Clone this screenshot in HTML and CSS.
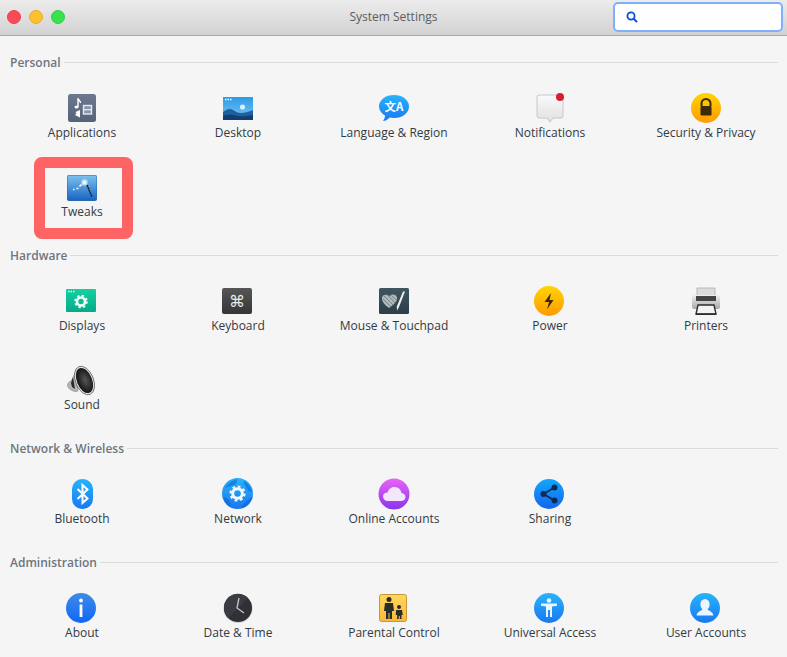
FILE: index.html
```html
<!DOCTYPE html>
<html lang="en">
<head>
<meta charset="utf-8">
<title>System Settings</title>
<link rel="stylesheet" href="styles.css">
</head>
<body>
<svg class="defs" aria-hidden="true">
  <defs>
    <linearGradient id="gYellow" x1="0" y1="0" x2="0" y2="1"><stop offset="0" stop-color="#ffd500"/><stop offset="1" stop-color="#ff9a00"/></linearGradient>
    <linearGradient id="gBlue" x1="0" y1="0" x2="0" y2="1"><stop offset="0" stop-color="#28b4fb"/><stop offset="1" stop-color="#1a78f2"/></linearGradient>
    <linearGradient id="gAbout" x1="0" y1="0" x2="0" y2="1"><stop offset="0" stop-color="#3f8ae8"/><stop offset="1" stop-color="#0f68f5"/></linearGradient>
    <linearGradient id="gShare" x1="0" y1="0" x2="0" y2="1"><stop offset="0" stop-color="#12a8fb"/><stop offset="1" stop-color="#1464f0"/></linearGradient>
    <linearGradient id="gPurple" x1="0" y1="0" x2="0" y2="1"><stop offset="0" stop-color="#ea64f6"/><stop offset="1" stop-color="#8a34ee"/></linearGradient>
    <linearGradient id="gSky" x1="0" y1="0" x2="0" y2="1"><stop offset="0" stop-color="#2b9be6"/><stop offset="1" stop-color="#7cc5f2"/></linearGradient>
    <linearGradient id="gTweak" x1="0" y1="0" x2="0" y2="1"><stop offset="0" stop-color="#7cc0ee"/><stop offset="1" stop-color="#1b66c4"/></linearGradient>
    <linearGradient id="gGreen" x1="0" y1="0" x2="0" y2="1"><stop offset="0" stop-color="#14d0a0"/><stop offset="1" stop-color="#04ab88"/></linearGradient>
    <linearGradient id="gSlate" x1="0" y1="0" x2="0" y2="1"><stop offset="0" stop-color="#6c7890"/><stop offset="1" stop-color="#56627a"/></linearGradient>
    <linearGradient id="gKey" x1="0" y1="0" x2="0" y2="1"><stop offset="0" stop-color="#565656"/><stop offset="1" stop-color="#353535"/></linearGradient>
    <linearGradient id="gTeal" x1="0" y1="0" x2="0" y2="1"><stop offset="0" stop-color="#3f5660"/><stop offset="1" stop-color="#2c3e48"/></linearGradient>
    <linearGradient id="gNote" x1="0" y1="0" x2="0" y2="1"><stop offset="0" stop-color="#fafafa"/><stop offset="1" stop-color="#e0e0e0"/></linearGradient>
    <linearGradient id="gParent" x1="0" y1="0" x2="0" y2="1"><stop offset="0" stop-color="#ffd75a"/><stop offset="1" stop-color="#f7b93a"/></linearGradient>
    <linearGradient id="gPrint" x1="0" y1="0" x2="0" y2="1"><stop offset="0" stop-color="#f0f0f0"/><stop offset="1" stop-color="#a8a8a8"/></linearGradient>
    <radialGradient id="gCone" cx="0.55" cy="0.5" r="0.55"><stop offset="0" stop-color="#555"/><stop offset="1" stop-color="#111"/></radialGradient>
  </defs>
</svg>

<header class="titlebar">
  <div class="controls">
    <span class="dot dot-close"></span>
    <span class="dot dot-min"></span>
    <span class="dot dot-max"></span>
  </div>
  <div class="title">System Settings</div>
  <div class="search">
    <svg class="search-icon" viewBox="0 0 12 12" width="12" height="12"><circle cx="5" cy="5" r="3.6" fill="none" stroke="#0b4fd0" stroke-width="1.8"/><path d="M7.6 7.6L11 11" stroke="#0b4fd0" stroke-width="2"/></svg>
  </div>
</header>

<main class="content">
  <section class="section">
    <div class="section-title"><span class="section-name">Personal</span><i class="rule"></i></div>
    <div class="grid">
      <div class="item">
        <svg class="icon" viewBox="0 0 32 32"><rect x="2" y="2" width="28" height="28" rx="2.5" fill="url(#gSlate)"/><path d="M12 6v9M12 6c.4 2.400 2.500 2.800 2.500 5" stroke="#fff" stroke-width="1.400" fill="none"/><ellipse cx="10.500" cy="15" rx="2" ry="1.600" fill="#fff"/><path d="M14 18v7.500l-5-2.500 1.500-1.500-1-1.500z" fill="#fff"/><rect x="17.500" y="13.500" width="8" height="8.500" fill="#8a94a8" stroke="#e6e8ee" stroke-width="1.400"/><path d="M17.500 17.700h8" stroke="#e6e8ee" stroke-width="1.300"/></svg>
        <span class="label">Applications</span>
      </div>
      <div class="item">
        <svg class="icon" viewBox="0 0 32 32"><rect x="1" y="5" width="30" height="23" fill="url(#gSky)"/><circle cx="20.500" cy="15" r="2.600" fill="#d8eefb"/><path d="M1 20c4-3 7-4 10-2s5 3 8 3 8-1 12-3v10H1z" fill="#1f5f9e"/><path d="M1 24c6-2 10-1 15 0s10 0 15-1v5H1z" fill="#123e72"/><path d="M3 7.500h1.500M5.500 7.500H7M8 7.500h1.500" stroke="#fff" stroke-width="1.500"/></svg>
        <span class="label">Desktop</span>
      </div>
      <div class="item">
        <svg class="icon" viewBox="0 0 32 32"><path d="M16 3c8.300 0 15 4.800 15 11.500S24.300 26 16 26c-1.500 0-3-.2-4.300-.5C10 27.300 7.500 29 5 29c1.200-1.400 2-3.400 2-5.500C3.300 21.400 1 18.200 1 14.500 1 7.800 7.700 3 16 3z" fill="url(#gBlue)"/><text class="bubble-text" x="16" y="19">文A</text></svg>
        <span class="label">Language &amp; Region</span>
      </div>
      <div class="item">
        <svg class="icon" viewBox="0 0 32 32"><path d="M5 3h22a2 2 0 0 1 2 2v19a2 2 0 0 1-2 2h-8l-3 4-3-4H5a2 2 0 0 1-2-2V5a2 2 0 0 1 2-2z" fill="url(#gNote)" stroke="#bdbdbd" stroke-width=".8"/><circle cx="26" cy="5" r="4" fill="#d61f33"/></svg>
        <span class="label">Notifications</span>
      </div>
      <div class="item">
        <svg class="icon" viewBox="0 0 32 32"><circle cx="16" cy="16" r="15" fill="url(#gYellow)"/><path d="M11.500 14v-2.500a4.500 4.500 0 0 1 9 0V14" fill="none" stroke="#3a2a08" stroke-width="2"/><rect x="10.500" y="14" width="11" height="9.500" rx="1" fill="#3a2a08"/></svg>
        <span class="label">Security &amp; Privacy</span>
      </div>
      <div class="item">
        <svg class="icon" viewBox="0 0 32 32"><rect x="1" y="4" width="30" height="26" rx="2" fill="#2a66ac"/><rect x="1.500" y="4.500" width="29" height="24.500" rx="1.500" fill="url(#gTweak)"/><path d="M21 14l5 12" stroke="#1c1c1c" stroke-width="1.500" stroke-dasharray="2 .6"/><circle cx="18.500" cy="11.500" r="3.200" fill="#fff" opacity=".6"/><circle cx="18.500" cy="11.500" r="1.500" fill="#fff"/><path d="M7 18.500h1.500M10.500 17.500h2M13.500 15.500l2-2" stroke="#fff" stroke-width="1.700"/></svg>
        <span class="label">Tweaks</span>
        <div class="marker"></div>
      </div>
    </div>
  </section>

  <section class="section">
    <div class="section-title"><span class="section-name">Hardware</span><i class="rule"></i></div>
    <div class="grid">
      <div class="item">
        <svg class="icon" viewBox="0 0 32 32"><rect x="0" y="4" width="30" height="23" rx="1" fill="url(#gGreen)"/><path d="M2 6.500h1.500M4.500 6.500H6M7 6.500h1.500" stroke="#d9fff2" stroke-width="1.300"/><circle cx="15" cy="16.500" r="4" fill="none" stroke="#f0fff9" stroke-width="2.600"/><circle cx="15" cy="16.500" r="5.800" fill="none" stroke="#f0fff9" stroke-width="2" stroke-dasharray="2.300 2.250"/></svg>
        <span class="label">Displays</span>
      </div>
      <div class="item">
        <svg class="icon" viewBox="0 0 32 32"><rect x="0" y="3" width="30" height="26" rx="2" fill="url(#gKey)"/><text class="key-text" x="15" y="21.500">⌘</text></svg>
        <span class="label">Keyboard</span>
      </div>
      <div class="item">
        <svg class="icon" viewBox="0 0 32 32"><rect x="1" y="3" width="30" height="26" rx="1.500" fill="url(#gTeal)"/><path d="M11 23C7 20 3.500 16.500 4 12.500c.3-3 5-4 7-1 2-3 7.500-2.500 8 1 .5 4-4 8-8 10.500z" fill="#b0b7ba"/><path d="M6 11l9 9M5 14l8 8M9 9l8 9M13 10l5 5" stroke="#6b7a80" stroke-width=".8"/><path d="M27 6.500l-6 15.500-2 3.500-.2-4L25 6.500z" fill="#eef0f0"/></svg>
        <span class="label">Mouse &amp; Touchpad</span>
      </div>
      <div class="item">
        <svg class="icon" viewBox="0 0 32 32"><circle cx="15" cy="16" r="15" fill="url(#gYellow)"/><path d="M17 8l-6.500 9H15l-2 7.500L19.500 15H15.500z" fill="#3a2a08"/></svg>
        <span class="label">Power</span>
      </div>
      <div class="item">
        <svg class="icon" viewBox="0 0 32 32"><rect x="7" y="3" width="18" height="8" fill="#dcdcdc" stroke="#999" stroke-width=".6"/><rect x="2" y="10" width="28" height="14" rx="2" fill="url(#gPrint)"/><rect x="6" y="11" width="20" height="5" fill="#444"/><path d="M8 20h16l2 9H6z" fill="#f4f4f4" stroke="#2e2e2e" stroke-width="1.400"/><rect x="6" y="28.500" width="20" height="1.500" fill="#2e2e2e"/></svg>
        <span class="label">Printers</span>
      </div>
      <div class="item">
        <svg class="icon" viewBox="0 0 32 32"><path d="M1.500 21c0-2 2-3.500 4-4.500L9 9l3 18c-2 1-4 .5-6-.5-2.500-1.200-4.500-3-4.500-5.500z" fill="#b4b4b4" stroke="#777" stroke-width=".5"/><path d="M5 19l2-6 2 12-3-2z" fill="#2a2a2a"/><ellipse cx="18.500" cy="16.500" rx="9" ry="15" transform="rotate(-22 18.500 16.500)" fill="#e4e4e4" stroke="#666" stroke-width=".8"/><ellipse cx="18.500" cy="16.500" rx="7.600" ry="13.200" transform="rotate(-22 18.500 16.500)" fill="url(#gCone)"/></svg>
        <span class="label">Sound</span>
      </div>
    </div>
  </section>

  <section class="section">
    <div class="section-title"><span class="section-name">Network &amp; Wireless</span><i class="rule"></i></div>
    <div class="grid">
      <div class="item">
        <svg class="icon" viewBox="0 0 32 32"><rect x="6" y="1" width="21" height="30" rx="10" fill="url(#gBlue)"/><path d="M11.500 11l10 9.500-5 4.500V7l5 4.500-10 9.500" fill="none" stroke="#fff" stroke-width="2" stroke-linejoin="miter"/></svg>
        <span class="label">Bluetooth</span>
      </div>
      <div class="item">
        <svg class="icon" viewBox="0 0 32 32"><circle cx="15.500" cy="15.500" r="15.500" fill="url(#gBlue)"/><path d="M3 10c3-5 8-8 12-9-1 3 1 4-3 6s-5 1-9 3zM22 3c4 2 7 6 8 11-3 0-5-2-6-5s-3-3-2-6zM1 19c3 0 6 2 7 5s1 5 0 5c-4-2-6-6-7-10zM31 19c-2 6-6 10-11 11-1-3 2-4 4-6s4-5 7-5z" fill="#0f63c9" opacity=".55"/><circle cx="15.500" cy="15.500" r="4.800" fill="none" stroke="#f3f8fd" stroke-width="3"/><circle cx="15.500" cy="15.500" r="7" fill="none" stroke="#f3f8fd" stroke-width="2.200" stroke-dasharray="2.800 2.700"/></svg>
        <span class="label">Network</span>
      </div>
      <div class="item">
        <svg class="icon" viewBox="0 0 32 32"><circle cx="16" cy="16" r="15.500" fill="url(#gPurple)"/><path d="M10 23c-3 0-5-2-5-4.500S7 14.500 9.500 14.500C10.500 11 13.500 9 16.500 9c4 0 6.500 2.800 7 6 2.300.2 4 1.800 4 4 0 2.400-2 4-4.500 4z" fill="#f4e6fb"/></svg>
        <span class="label">Online Accounts</span>
      </div>
      <div class="item">
        <svg class="icon" viewBox="0 0 32 32"><circle cx="15" cy="16" r="15" fill="url(#gShare)"/><path d="M20.500 9.500L9.500 16l11 6.500" fill="none" stroke="#0f2b55" stroke-width="1.800"/><circle cx="20.500" cy="9.500" r="3" fill="#0f2b55"/><circle cx="9.500" cy="16" r="3" fill="#0f2b55"/><circle cx="20.500" cy="22.500" r="3" fill="#0f2b55"/></svg>
        <span class="label">Sharing</span>
      </div>
    </div>
  </section>

  <section class="section">
    <div class="section-title"><span class="section-name">Administration</span><i class="rule"></i></div>
    <div class="grid">
      <div class="item">
        <svg class="icon" viewBox="0 0 32 32"><circle cx="15" cy="16" r="15" fill="url(#gAbout)"/><circle cx="15" cy="8.500" r="1.900" fill="#fff"/><rect x="13.600" y="12.500" width="2.800" height="12.500" fill="#fff"/></svg>
        <span class="label">About</span>
      </div>
      <div class="item">
        <svg class="icon" viewBox="0 0 32 32"><circle cx="16" cy="16.500" r="14.500" fill="#cfcfcf"/><circle cx="16" cy="16" r="14" fill="#2f3136"/><path d="M2 16a14 14 0 0 1 24-10L6 26a14 14 0 0 1-4-10z" fill="#3a3c41"/><path d="M17 6L15 16l7 5" fill="none" stroke="#c4c6c8" stroke-width="1.300"/></svg>
        <span class="label">Date &amp; Time</span>
      </div>
      <div class="item">
        <svg class="icon" viewBox="0 0 32 32"><rect x="1.500" y="2.500" width="27" height="27" rx="2" fill="url(#gParent)" stroke="#c9963a"/><circle cx="11" cy="7.500" r="2.500" fill="#2a2a2a"/><path d="M7 11h8l1 8h-2v8h-2.500v-6h-1v6H8v-8H6z" fill="#2a2a2a"/><circle cx="21" cy="15" r="2" fill="#2a2a2a"/><path d="M18 18h6l.8 5h-1.300v4h-1.700v-3h-1v3h-1.700v-4h-1.300z" fill="#2a2a2a"/></svg>
        <span class="label">Parental Control</span>
      </div>
      <div class="item">
        <svg class="icon" viewBox="0 0 32 32"><circle cx="15" cy="16" r="15" fill="url(#gBlue)"/><circle cx="15" cy="8.500" r="2.300" fill="#eaf6ff"/><path d="M7 11.500h16v2.300l-5 .8V25h-2v-7h-2v7h-2V14.600l-5-.8z" fill="#eaf6ff"/></svg>
        <span class="label">Universal Access</span>
      </div>
      <div class="item">
        <svg class="icon" viewBox="0 0 32 32"><circle cx="15" cy="16" r="15" fill="url(#gBlue)"/><ellipse cx="15" cy="12.500" rx="4.600" ry="5.500" fill="#eaf6ff"/><path d="M12.500 17c-.5 2-5 2-6 6.500h17c-1-4.500-5.500-4.500-6-6.500z" fill="#eaf6ff"/></svg>
        <span class="label">User Accounts</span>
      </div>
    </div>
  </section>
</main>
</body>
</html>
```
FILE: styles.css
```css
* { box-sizing: border-box; }

html, body {
  margin: 0;
  height: 100%;
  overflow: hidden;
}

body {
  background: #f5f5f5;
  font-family: "Open Sans", "Liberation Sans", sans-serif;
  font-size: 12px;
  color: #333a44;
}

.defs {
  position: absolute;
  width: 0;
  height: 0;
}

.titlebar {
  height: 36px;
  display: flex;
  align-items: center;
  padding: 0 4px 1px 7px;
  background: linear-gradient(#ececec, #d2d2d2);
  border-bottom: 1px solid #a9a9a9;
  position: relative;
}

.controls {
  display: flex;
  gap: 8px;
}

.dot {
  width: 14px;
  height: 14px;
  border-radius: 50%;
}

.dot-close { background: #fb4a55; border: 1px solid #e6404c; }
.dot-min { background: #fdc12f; border: 1px solid #e9ae27; }
.dot-max { background: #37e24e; border: 1px solid #2fcf45; }

.title {
  position: absolute;
  left: 0;
  right: 0;
  top: 8px;
  text-align: center;
  line-height: 17px;
  color: #5d5d5d;
}

.search {
  margin-left: auto;
  width: 170px;
  height: 30px;
  background: #fff;
  border: 2px solid #7fb0fb;
  border-radius: 5px;
  display: flex;
  align-items: center;
  padding-left: 11px;
}

.search-icon { display: block; }

.content {
  padding: 9px 9px 0 4px;
}

.section { padding-top: 9px; }

.section-title {
  display: flex;
  align-items: center;
  gap: 3px;
  height: 16px;
  margin: 0 0 10px 6px;
  font-weight: 600;
  color: #6e7680;
}

.section-name {
  line-height: 16px;
  padding-top: 2px;
}

.rule {
  flex: 1;
  height: 1px;
  background: #dcdcdc;
}

.grid {
  display: grid;
  grid-template-columns: repeat(5, 156px);
  grid-auto-rows: 79px;
}

.item {
  position: relative;
  display: flex;
  flex-direction: column;
  align-items: center;
  padding-top: 12px;
}

.icon {
  display: block;
  width: 32px;
  height: 32px;
}

.label {
  line-height: 16px;
  padding-top: 1px;
  white-space: nowrap;
}

.marker {
  position: absolute;
  left: 30px;
  top: -2px;
  width: 99px;
  height: 82px;
  border: 11px solid #ff6464;
  border-radius: 8px;
}

.bubble-text {
  font-family: "Noto Sans CJK SC", "Open Sans", sans-serif;
  font-size: 11.500px;
  font-weight: 700;
  fill: #fff;
  text-anchor: middle;
}

.key-text {
  font-family: "DejaVu Sans", sans-serif;
  font-size: 16px;
  fill: #e8e8e8;
  text-anchor: middle;
}
```
